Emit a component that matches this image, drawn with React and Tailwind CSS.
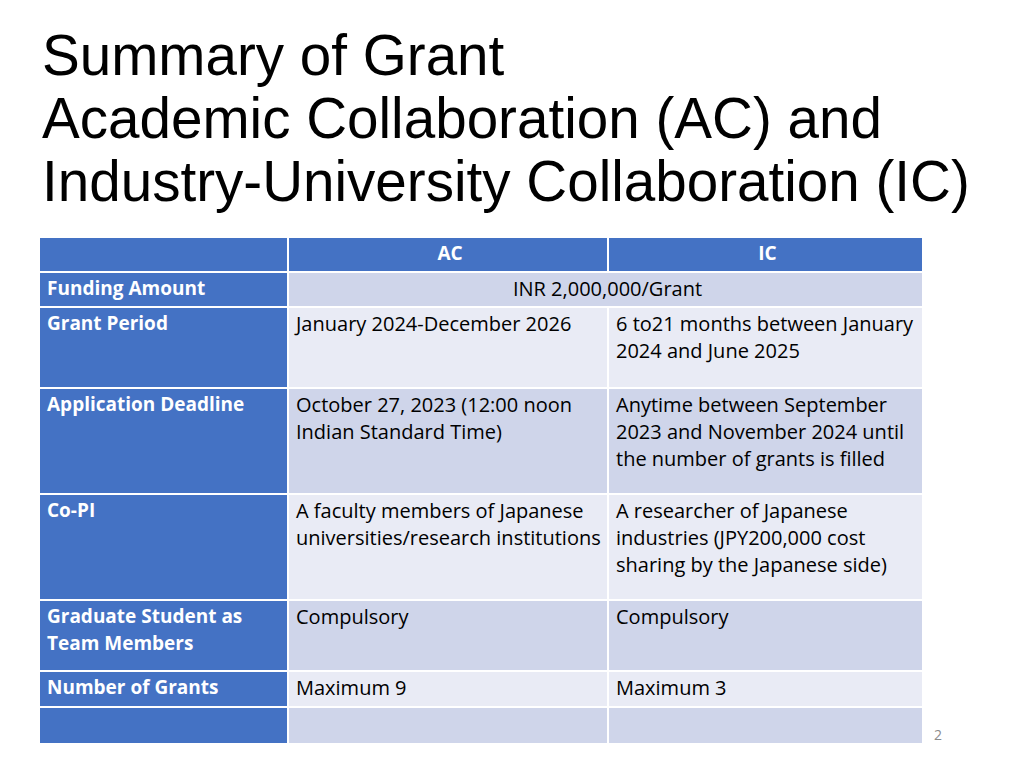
const rows = [
  { label: 'Funding Amount', h: 'h-[33px]', span: 'INR 2,000,000/Grant', shade: 'dark' },
  { label: 'Grant Period', h: 'h-[79px]', ac: 'January 2024-December 2026', ic: '6 to21 months between January 2024 and June 2025', shade: 'light' },
  { label: 'Application Deadline', h: 'h-[104px]', ac: 'October 27, 2023 (12:00 noon Indian Standard Time)', ic: 'Anytime between September 2023 and November 2024 until the number of grants is filled', shade: 'dark' },
  { label: 'Co-PI', h: 'h-[104px]', ac: 'A faculty members of Japanese universities/research institutions', ic: 'A researcher of Japanese industries (JPY200,000 cost sharing by the Japanese side)', shade: 'light' },
  { label: 'Graduate Student as Team Members', h: 'h-[69px]', ac: 'Compulsory', ic: 'Compulsory', shade: 'dark' },
  { label: 'Number of Grants', h: 'h-[34px]', ac: 'Maximum 9', ic: 'Maximum 3', shade: 'light' },
  { label: '', h: 'h-[35px]', ac: '', ic: '', shade: 'dark' },
];

function Cell({ children, className = '' }) {
  return <div className={`pl-[7px] pr-[3px] pt-[2px] leading-[27px] ${className}`}>{children}</div>;
}

export default function App() {
  return (
    <div className="w-[1024px] h-[768px] bg-white relative overflow-hidden">
      <h1 className="pl-[42px] pt-[24px] text-[56.6px] leading-[63px] text-black font-['Liberation_Sans',Arial,sans-serif]">
        Summary of Grant
        <br />
        Academic Collaboration (AC) and
        <br />
        Industry-University Collaboration (IC)
      </h1>

      <div className="ml-[40px] mt-[25px] w-[882px] grid grid-cols-[247px_318px_313px] gap-[2px] text-[20px] text-black font-['Open_Sans','Noto_Sans',sans-serif]">
        <div className="h-[33px] bg-[#4472c4]" />
        <Cell className="h-[33px] bg-[#4472c4] text-white font-bold text-[19px] text-center">AC</Cell>
        <Cell className="h-[33px] bg-[#4472c4] text-white font-bold text-[19px] text-center">IC</Cell>
        {rows.map((r, i) => {
          const bg = r.shade === 'dark' ? 'bg-[#cfd5ea]' : 'bg-[#e9ebf5]';
          return [
            <Cell key={i + 'l'} className={`${r.h} bg-[#4472c4] text-white font-bold text-[19px]`}>{r.label}</Cell>,
            r.span ? (
              <Cell key={i + 's'} className={`${r.h} ${bg} col-span-2 text-center`}>{r.span}</Cell>
            ) : (
              [
                <Cell key={i + 'a'} className={`${r.h} ${bg}`}>{r.ac}</Cell>,
                <Cell key={i + 'c'} className={`${r.h} ${bg}`}>{r.ic}</Cell>,
              ]
            ),
          ];
        })}
      </div>

      <div className="absolute left-[934px] top-[724px] text-[14px] text-[#8b8b8b] font-['Open_Sans',sans-serif]">2</div>
    </div>
  );
}
